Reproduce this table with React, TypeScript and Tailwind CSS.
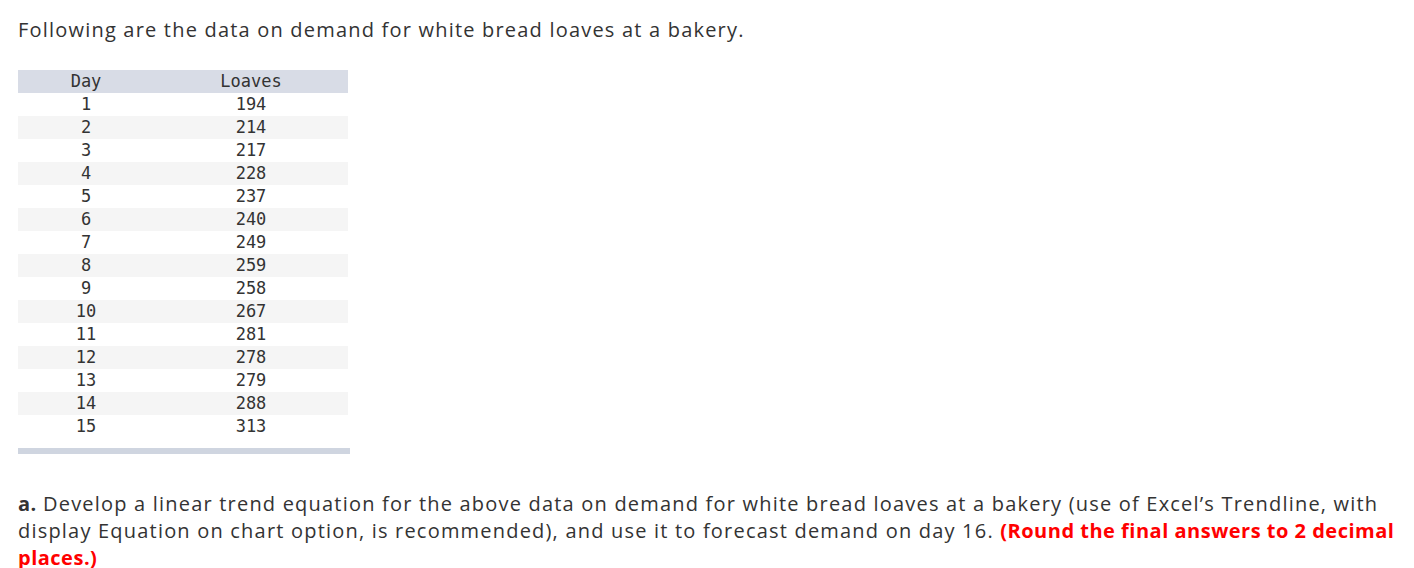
import React from "react";

const data: [number, number][] = [
  [1, 194], [2, 214], [3, 217], [4, 228], [5, 237], [6, 240], [7, 249], [8, 259],
  [9, 258], [10, 267], [11, 281], [12, 278], [13, 279], [14, 288], [15, 313],
];

export default function App() {
  return (
    <div className="w-[1414px] h-[568px] bg-white pl-[18px] pr-[8px] pt-[16px] text-[#333333] font-['Open_Sans',sans-serif] text-[20px] leading-[27px] tracking-[1.2px] overflow-hidden">
      <p>Following are the data on demand for white bread loaves at a bakery.</p>
      <div className="mt-[27px] w-[332px] font-['DejaVu_Sans_Mono',monospace] text-[17px] tracking-normal text-[#333333]">
        <div className="flex h-[23px] items-center bg-[#d8dce6] w-[330px]">
          <div className="w-[136px] text-center">Day</div>
          <div className="w-[194px] text-center">Loaves</div>
        </div>
        {data.map(([d, l], i) => (
          <div key={d} className={`flex h-[23px] items-center w-[330px] ${i % 2 === 1 ? "bg-[#f5f5f5]" : "bg-white"}`}>
            <div className="w-[136px] text-center">{d}</div>
            <div className="w-[194px] text-center">{l}</div>
          </div>
        ))}
        <div className="mt-[10px] h-[6px] w-[332px] bg-[#cfd5e0]" />
      </div>
      <p className="mt-[36px]">
        <span className="font-bold tracking-[0.4px]">a.</span> Develop a linear trend equation for the above data on demand for white bread loaves at a bakery (use of Excel’s Trendline, with display Equation on chart option, is recommended), and use it to forecast demand on day 16.{" "}
        <span className="font-bold tracking-[0.5px] text-[#ff0000]">(Round the final answers to 2 decimal places.)</span>
      </p>
    </div>
  );
}
